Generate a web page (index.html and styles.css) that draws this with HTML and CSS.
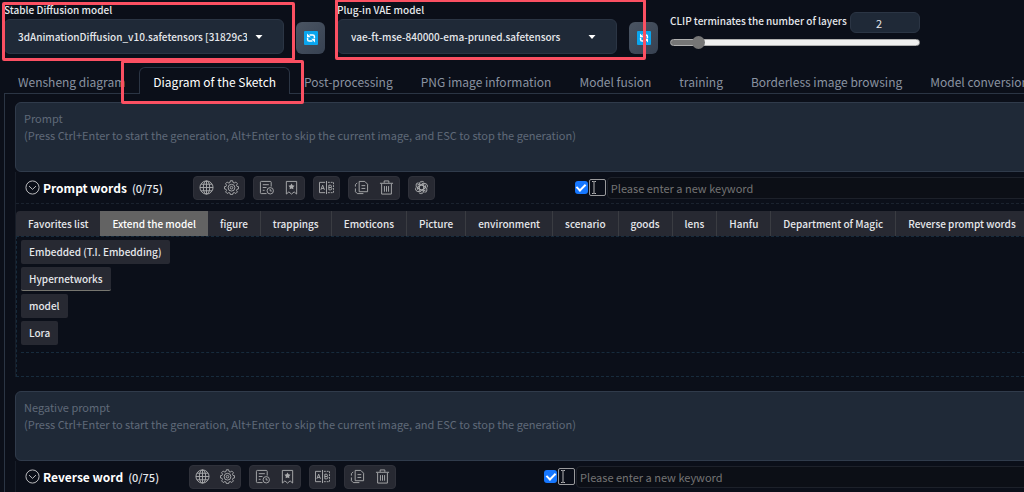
FILE: index.html
```html
<!DOCTYPE html>
<html lang="en">
<head>
<meta charset="utf-8">
<title>Stable Diffusion</title>
<link rel="stylesheet" href="styles.css">
</head>
<body>
<svg class="sprite" aria-hidden="true">
  <symbol id="chev" viewBox="0 0 16 16"><circle cx="8" cy="8" r="7"/><path d="M4.300 6.500 8 10l3.700-3.500"/></symbol>
  <symbol id="caret" viewBox="0 0 8 4"><path d="M0.500 0h7L4 4z"/></symbol>
  <symbol id="globe" viewBox="0 0 16 16"><circle cx="8" cy="8" r="7"/><ellipse cx="8" cy="8" rx="3.400" ry="7"/><path d="M8 1v14M1 8h14M2.200 4.500h11.600M2.200 11.500h11.600"/></symbol>
  <symbol id="gear" viewBox="0 0 16 16"><path d="M6.800.8h2.400l.4 1.900 1.300.5 1.700-1 1.700 1.700-1 1.700.5 1.200 1.700.3v2.400l-1.700.4-.5 1.200 1 1.600-1.700 1.700-1.700-1-1.300.5-.4 1.700H6.800l-.4-1.700-1.300-.5-1.700 1-1.700-1.700 1-1.600-.5-1.200-1.700-.4V7.100l1.700-.3.5-1.200-1-1.700 1.700-1.700 1.700 1 1.300-.5z"/><circle cx="8" cy="8.200" r="3.600"/><circle cx="8" cy="8.200" r="1.400"/></symbol>
  <symbol id="history" viewBox="0 0 16 16"><path d="M13 7V2.500Q13 1.500 12 1.500H2.500Q1.500 1.500 1.500 2.500v11q0 1 1 1H8M4 5h6.500M4 8h4M4 11h2"/><circle cx="12" cy="11.500" r="3.400"/><path d="M11.900 9.500v2.200h1.800"/></symbol>
  <symbol id="bookmark" viewBox="0 0 16 16"><path d="M2.500 15V1.500h11V15L10.800 12.700 8 15l-2.800-2.300z"/><path class="solid" d="m8 3.700 1.100 1.900 2.200.4-1.500 1.700.2 2.200L8 9l-2 .9.200-2.200L4.700 6l2.200-.4z"/></symbol>
  <symbol id="translate" viewBox="0 0 16 16"><path d="M6.500 2.500h-6v11h6M8 1v14"/><path stroke-dasharray="2 1" d="M9.500 2.500h6v11h-6"/><path d="m2 10.500 1.900-5 1.900 5M2.600 9h2.600M10.500 5.500v5h1.700q1.500 0 1.500-1.300T12.200 8h-1.700 1.500q1.300 0 1.300-1.200T12 5.500z"/></symbol>
  <symbol id="copy" viewBox="0 0 16 16"><path d="M5.500 1.500h6l3 3v8h-9zM8 6h4M8 9h4"/><path d="M3.500 3 1.500 5v2M1.500 9v3.500l2 2H10"/></symbol>
  <symbol id="trash" viewBox="0 0 16 16"><path d="M1 3.500h14M5.500 3V1h5v2M2.800 4v11h10.400V4M5.800 6.500v6M8 6.500v6M10.200 6.500v6"/></symbol>
  <symbol id="gpt" viewBox="0 0 16 16"><path id="petal" d="M8 5.200 5.600 6.600v5L8 13M5.600 6.600V4.200a2.900 2.900 0 0 1 5.300-1.500"/><use href="#petal" transform="rotate(60 8 8)"/><use href="#petal" transform="rotate(120 8 8)"/><use href="#petal" transform="rotate(180 8 8)"/><use href="#petal" transform="rotate(240 8 8)"/><use href="#petal" transform="rotate(300 8 8)"/></symbol>
  <symbol id="sync" viewBox="0 0 14 14"><rect width="14" height="14" rx="1" fill="#0aa5ee"/><path fill="none" stroke="#fff" stroke-width="1.500" d="M5.500 4h3.300q1.600 0 1.600 1.600v1.600M8.500 10H5.200Q3.600 10 3.600 8.400V6.800"/><path fill="#fff" d="M3 2.500v3.800h3.800zM11 11.500V7.700H7.200z"/></symbol>
  <symbol id="beam" viewBox="0 0 6 13"><path d="M1 .5h1.500L3 1l.5-.5H5M1 12.500h1.500L3 12l.5.500H5M3 1v11"/></symbol>
</svg>

<header class="settings">
  <div class="field">
    <label for="checkpoint">Stable Diffusion model</label>
    <div class="select">
      <select id="checkpoint"><option>3dAnimationDiffusion_v10.safetensors [31829c378d]</option></select>
      <svg class="caret"><use href="#caret"/></svg>
    </div>
    <span class="mark mark-model"></span>
  </div>
  <button class="refresh" aria-label="Refresh models"><svg><use href="#sync"/></svg></button>
  <div class="field">
    <label for="vae">Plug-in VAE model</label>
    <div class="select">
      <select id="vae"><option>vae-ft-mse-840000-ema-pruned.safetensors</option></select>
      <svg class="caret"><use href="#caret"/></svg>
    </div>
    <span class="mark mark-vae"></span>
  </div>
  <button class="refresh" aria-label="Refresh VAE"><svg><use href="#sync"/></svg></button>
  <div class="clip">
    <div class="clip-head">
      <label for="clip">CLIP terminates the number of layers</label>
      <input class="number" type="text" value="2" aria-label="Layers">
    </div>
    <input class="range" id="clip" type="range" min="1" max="12" value="2">
  </div>
</header>

<nav class="tabs">
  <button>Wensheng diagram</button>
  <button class="active">Diagram of the Sketch<span class="mark mark-tab"></span></button>
  <button>Post-processing</button>
  <button>PNG image information</button>
  <button>Model fusion</button>
  <button>training</button>
  <button>Borderless image browsing</button>
  <button>Model conversion</button>
</nav>

<main class="panel">
  <textarea class="prompt" aria-label="Prompt" placeholder="Prompt
(Press Ctrl+Enter to start the generation, Alt+Enter to skip the current image, and ESC to stop the generation)"></textarea>
  <section class="words">
    <div class="toolbar">
      <button class="title"><svg><use href="#chev"/></svg>Prompt words</button>
      <span class="count">(0/75)</span>
      <div class="tools">
        <div class="group"><button aria-label="Language"><svg><use href="#globe"/></svg></button><button aria-label="Settings"><svg><use href="#gear"/></svg></button></div>
        <div class="group"><button aria-label="History"><svg><use href="#history"/></svg></button><button aria-label="Favorites"><svg><use href="#bookmark"/></svg></button></div>
        <div class="group"><button aria-label="Translate"><svg><use href="#translate"/></svg></button></div>
        <div class="group"><button aria-label="Copy"><svg><use href="#copy"/></svg></button><button aria-label="Delete"><svg><use href="#trash"/></svg></button></div>
        <div class="group"><button aria-label="Assistant"><svg><use href="#gpt"/></svg></button></div>
      </div>
      <input class="check" type="checkbox" checked aria-label="Auto input">
      <button class="cursor" aria-label="Input mode"><svg><use href="#beam"/></svg></button>
      <input class="keyword" type="text" placeholder="Please enter a new keyword" aria-label="New keyword">
    </div>
    <div class="categories">
      <button>Favorites list</button><button class="active">Extend the model</button><button>figure</button><button>trappings</button><button>Emoticons</button><button>Picture</button><button>environment</button><button>scenario</button><button>goods</button><button>lens</button><button>Hanfu</button><button>Department of Magic</button><button>Reverse prompt words</button>
    </div>
    <div class="library">
      <div class="models">
        <button>Embedded (T.I. Embedding)</button>
        <button class="under">Hypernetworks</button>
        <button>model</button>
        <button>Lora</button>
      </div>
    </div>
  </section>

  <textarea class="prompt" aria-label="Negative prompt" placeholder="Negative prompt
(Press Ctrl+Enter to start the generation, Alt+Enter to skip the current image, and ESC to stop the generation)"></textarea>
  <section class="words">
    <div class="toolbar">
      <button class="title"><svg><use href="#chev"/></svg>Reverse word</button>
      <span class="count">(0/75)</span>
      <div class="tools tools-short">
        <div class="group"><button aria-label="Language"><svg><use href="#globe"/></svg></button><button aria-label="Settings"><svg><use href="#gear"/></svg></button></div>
        <div class="group"><button aria-label="History"><svg><use href="#history"/></svg></button><button aria-label="Favorites"><svg><use href="#bookmark"/></svg></button></div>
        <div class="group"><button aria-label="Translate"><svg><use href="#translate"/></svg></button></div>
        <div class="group"><button aria-label="Copy"><svg><use href="#copy"/></svg></button><button aria-label="Delete"><svg><use href="#trash"/></svg></button></div>
      </div>
      <input class="check" type="checkbox" checked aria-label="Auto input">
      <button class="cursor" aria-label="Input mode"><svg><use href="#beam"/></svg></button>
      <input class="keyword" type="text" placeholder="Please enter a new keyword" aria-label="New negative keyword">
    </div>
  </section>
</main>
</body>
</html>
```
FILE: styles.css
```css
* { box-sizing: border-box; }

body {
  margin: 0;
  padding-left: 4px;
  height: 100vh;
  overflow: hidden;
  background: #0b0f19;
  color: #e5e7eb;
  font: 11px/18px "Noto Sans CJK SC", "Noto Sans", sans-serif;
}

button, input, select, textarea {
  margin: 0;
  font: inherit;
  color: inherit;
}

button {
  padding: 0;
  border: 0;
  background: none;
  white-space: nowrap;
}

.sprite { position: absolute; width: 0; height: 0; }

.mark {
  position: absolute;
  z-index: 2;
  border: 3px solid #fb5062;
  border-radius: 2px;
  pointer-events: none;
}

/* settings */
.settings { display: flex; align-items: flex-start; height: 67px; font-size: 10px; }

.field { position: relative; width: 280px; padding-top: 1px; }
.field label { display: block; font-weight: 500; white-space: nowrap; }

.select { position: relative; }
.select select {
  display: block;
  appearance: none;
  width: 100%;
  height: 35px;
  padding: 0 36px 0 13px;
  border: 1px solid #2b3544;
  border-radius: 6px;
  background: #1f2937;
  font-weight: 500;
}
.caret { position: absolute; top: 16px; right: 21px; width: 8px; height: 4px; fill: #fff; }

.mark-model { inset: 2px -11px -7px -2px; }
.mark-vae { inset: -1px -29px -6px -2px; }

.refresh {
  display: grid;
  place-items: center;
  flex: none;
  width: 29px;
  height: 32px;
  margin: 22px 12px 0;
  border-radius: 6px;
  background: linear-gradient(135deg, #4b5563, #374151);
}
.refresh svg { width: 14px; height: 14px; }

.clip { width: 250px; padding-top: 12px; }
.clip-head { display: flex; justify-content: space-between; }
.clip-head label { font-weight: 500; white-space: nowrap; }
.number {
  flex: none;
  width: 70px;
  height: 21px;
  padding: 0 12px 0 0;
  border: 1px solid #2b3544;
  border-radius: 6px;
  background: #1f2937;
  font-size: 11px;
  text-align: center;
}
.range {
  appearance: none;
  display: block;
  width: 100%;
  height: 12px;
  margin-top: 3px;
  background: none;
}
.range::-webkit-slider-runnable-track {
  height: 7px;
  border: 1px solid #b0b0b0;
  border-radius: 4px;
  background: linear-gradient(90deg, #767676 11%, #efefef 11%);
}
.range::-webkit-slider-thumb {
  appearance: none;
  width: 13px;
  height: 13px;
  margin-top: -4px;
  border-radius: 50%;
  background: #767676;
}

/* tabs */
.tabs { display: flex; height: 27px; border-bottom: 1px solid #2b3544; }
.tabs button {
  position: relative;
  flex: none;
  height: 27px;
  padding: 1px 13px 0;
  border: 1px solid transparent;
  border-bottom: 0;
  border-radius: 6px 6px 0 0;
  color: #8a93a1;
  font-size: 12px;
}
.tabs .active { border-color: #2b3544; background: #0b0f19; color: #fff; }
.mark-tab { inset: -8px -15px -10px -19px; }

/* prompt panel */
.panel { margin-right: -20px; padding: 8px 0 0 10px; border-left: 1px solid #2b3544; }

.prompt {
  display: block;
  width: 100%;
  height: 70px;
  padding: 7px 8px;
  border: 1px solid #303b4b;
  border-radius: 6px;
  background: #1f2937;
  line-height: 17px;
  resize: none;
}
.prompt::placeholder { color: #5f6979; }

.words { margin-bottom: 14px; border-left: 1px solid #171d28; }

.toolbar {
  display: flex;
  align-items: center;
  height: 32px;
  padding-left: 9px;
  border-bottom: 1px dashed #1a222e;
}
.title {
  display: flex;
  align-items: center;
  gap: 3px;
  color: #fff;
  font-size: 12px;
  font-weight: 700;
}
.title svg { width: 15px; height: 15px; fill: none; stroke: #c4c4c6; }
.count { margin: 0 30px 0 5px; font-weight: 500; }

.tools { display: flex; gap: 8px; margin-right: 140px; }
.tools-short { margin-right: 148px; }
.group {
  display: flex;
  gap: 10px;
  height: 24px;
  padding: 0 5px;
  border: 1px solid #2f313a;
  border-radius: 4px;
  background: #272932;
}
.group button { display: grid; place-items: center; }
.group svg { width: 15px; height: 15px; fill: none; stroke: #aaabad; }
.solid { fill: #aaabad; stroke: none; }

.check {
  appearance: none;
  display: grid;
  place-items: center;
  flex: none;
  width: 13px;
  height: 13px;
  border-radius: 3px;
  background: #1677ff;
}
.check::after {
  content: "";
  width: 4px;
  height: 7px;
  margin-bottom: 2px;
  border: solid #fff;
  border-width: 0 2px 2px 0;
  transform: rotate(45deg);
}
.cursor {
  flex: none;
  display: flex;
  align-items: center;
  width: 17px;
  height: 17px;
  margin: 0 1px;
  border: 1px solid #9a9a9c;
  border-radius: 2px;
}
.cursor svg { width: 6px; height: 13px; margin-left: 1px; fill: none; stroke: #b4b4b6; }
.keyword {
  flex: 1;
  min-width: 0;
  height: 22px;
  padding: 0 3px;
  border: 1px solid #1d212a;
  border-radius: 4px;
  background: #0c0f16;
}
.keyword::placeholder { color: #747474; }

.categories {
  display: flex;
  margin-top: 7px;
  border-radius: 4px 0 0 0;
  background: #272932;
  font-size: 10px;
  font-weight: 500;
}
.categories button {
  flex: none;
  height: 25px;
  padding: 0 12px;
  border-right: 1px solid #3a3c42;
}
.categories button:first-child { border-right: 0; }
.categories .active { border-right: 0; background: #636363; color: #fff; }

.library {
  height: 141px;
  padding: 3px 4px;
  border: 1px dashed #172b3c;
  border-width: 1px 0 1px 1px;
}
.models {
  display: flex;
  flex-direction: column;
  align-items: flex-start;
  gap: 3px;
  padding-bottom: 7px;
  border-bottom: 1px dashed #172b3c;
  font-size: 10px;
  font-weight: 500;
}
.models button {
  height: 24px;
  padding: 0 8px;
  border-radius: 2px;
  background: #272932;
}
.models .under { border-bottom: 1px solid #77766f; }
```
